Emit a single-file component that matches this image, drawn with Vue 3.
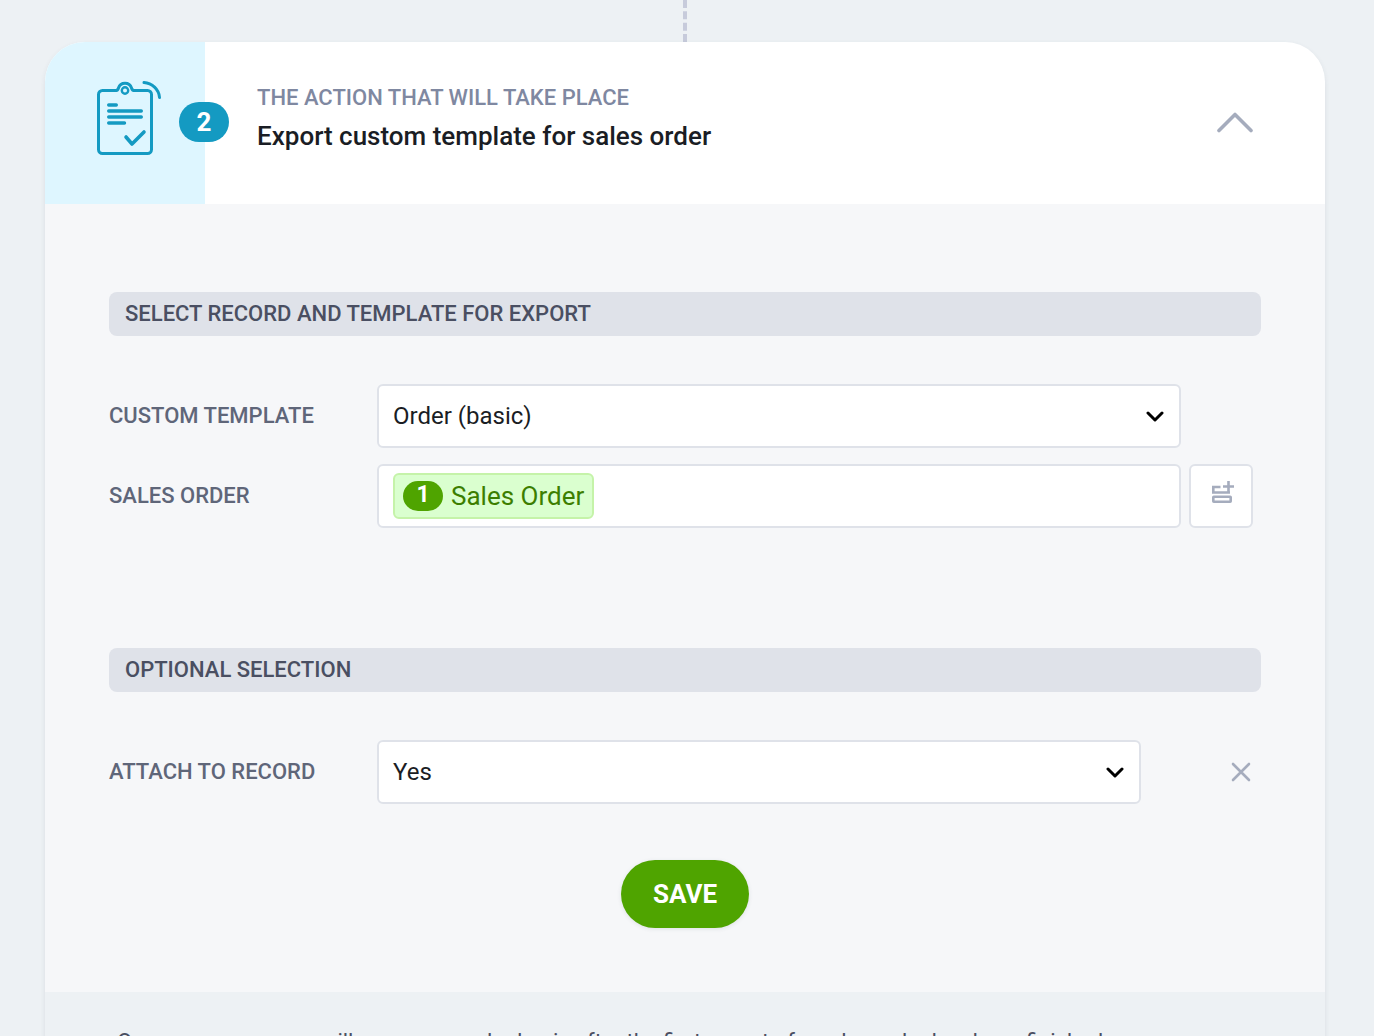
<script setup>
const fields = {
  template: 'Order (basic)',
  attach: 'Yes',
}
</script>

<template>
  <div class="page">
    <div class="connector"></div>
    <section class="card">
      <header class="head">
        <div class="icon-cell">
          <svg class="clip" width="68" height="78" viewBox="0 0 68 78" fill="none" stroke="#149ac2" stroke-width="3" stroke-linecap="round" stroke-linejoin="round">
            <path d="M21 10.500H7.500a4 4 0 0 0-4 4v55a4 4 0 0 0 4 4h45a4 4 0 0 0 4-4v-55a4 4 0 0 0-4-4H39" />
            <path d="M21 10.500c1.500 0 2-.8 2.500-2.500a6.800 6.800 0 0 1 13 0c.5 1.700 1 2.500 2.500 2.500" />
            <circle cx="30" cy="10.500" r="3.200" stroke-width="2.400" />
            <path d="M49 2.500c8 .5 15 7 15.500 15" />
            <path d="M13.700 25h7.600M13.700 31h32.600M13.700 37h32.600M13.700 43h15.800" stroke-width="3.400" />
            <path d="M31 57l6 7 12-12" stroke-width="3.600" />
          </svg>
        </div>
        <span class="step">2</span>
        <div class="titles">
          <div class="eyebrow">THE ACTION THAT WILL TAKE PLACE</div>
          <div class="title">Export custom template for sales order</div>
        </div>
        <svg class="collapse" width="38" height="22" viewBox="0 0 38 22" fill="none" stroke="#a5acbd" stroke-width="3.600" stroke-linecap="round" stroke-linejoin="round">
          <path d="M3 19.500L19 3.500l16 16" />
        </svg>
      </header>

      <div class="body">
        <h2 class="band">SELECT RECORD AND TEMPLATE FOR EXPORT</h2>
        <div class="rows">
          <div class="row">
            <label class="label">CUSTOM TEMPLATE</label>
            <div class="input wide">
              <span class="value">{{ fields.template }}</span>
              <svg class="chev" width="18" height="12" viewBox="0 0 18 12" fill="none" stroke="#000" stroke-width="3" stroke-linecap="round" stroke-linejoin="round"><path d="M2 3l7 7 7-7" /></svg>
            </div>
          </div>
          <div class="row">
            <label class="label">SALES ORDER</label>
            <div class="input wide">
              <span class="tag"><span class="tag-num">1</span><span class="tag-text">Sales Order</span></span>
            </div>
            <button class="add">
              <svg width="30" height="30" viewBox="0 0 30 30" fill="none" stroke="#a5acbd" stroke-width="2.600">
                <path d="M22.500 0v11M17 5.500h11" />
                <path d="M14.500 6H7.300v5.500H24" />
                <rect x="7.300" y="15.800" width="17.400" height="5" rx=".5" />
              </svg>
            </button>
          </div>
        </div>

        <h2 class="band second">OPTIONAL SELECTION</h2>
        <div class="rows">
          <div class="row">
            <label class="label">ATTACH TO RECORD</label>
            <div class="input narrow">
              <span class="value">{{ fields.attach }}</span>
              <svg class="chev" width="18" height="12" viewBox="0 0 18 12" fill="none" stroke="#000" stroke-width="3" stroke-linecap="round" stroke-linejoin="round"><path d="M2 3l7 7 7-7" /></svg>
            </div>
            <svg class="remove" width="20" height="20" viewBox="0 0 20 20" fill="none" stroke="#a5acbd" stroke-width="2.600" stroke-linecap="round"><path d="M2 2l16 16M18 2L2 18" /></svg>
          </div>
        </div>
        <div class="actions">
          <button class="save">SAVE</button>
        </div>
      </div>

      <footer class="foot">
        <p>Once your sequence will run on a regular basis after the first export of a sales order has been finished</p>
      </footer>
    </section>
  </div>
</template>

<style scoped>
.page {
  height: 1036px;
  overflow: hidden;
  padding-right: 4px;
  background: #edf1f4;
  font-family: Roboto, "Liberation Sans", sans-serif;
  box-sizing: border-box;
}
.connector {
  width: 0;
  height: 42px;
  margin: 0 auto;
  border-left: 4px dashed #c7cbdb;
}
.card {
  width: 1280px;
  margin: 0 auto;
  border-radius: 40px 40px 0 0;
  background: #edf1f4;
  box-shadow: 0 2px 5px rgba(60, 70, 90, 0.1);
  overflow: hidden;
}
.head {
  display: flex;
  align-items: center;
  height: 162px;
  background: #fff;
}
.icon-cell {
  width: 160px;
  height: 100%;
  flex: none;
  background: #def6ff;
  display: flex;
  padding: 38px 0 0 50px;
  box-sizing: border-box;
}
.clip { display: block; }
.step {
  flex: none;
  width: 50px;
  height: 40px;
  margin: -2px 0 0 -26px;
  border-radius: 20px;
  background: #149ac2;
  color: #fff;
  font-size: 26px;
  font-weight: 700;
  line-height: 40px;
  text-align: center;
}
.titles { margin-left: 28px; flex: 1; padding-bottom: 11px; }
.eyebrow {
  color: #7f88a1;
  font-size: 22px;
  font-weight: 500;
  line-height: 28px;
}
.title {
  margin-top: 8px;
  color: #1a1d24;
  font-size: 26px;
  font-weight: 500;
  line-height: 32px;
}
.collapse { flex: none; margin: 0 71px 0 0; position: relative; top: -1px; }
.body {
  background: #f6f7f9;
  height: 788px;
  padding: 88px 64px 0;
  box-sizing: border-box;
}
.band {
  margin: 0;
  height: 44px;
  padding-left: 16px;
  border-radius: 8px;
  background: #dfe2e9;
  color: #4a4f62;
  font-size: 22px;
  font-weight: 500;
  line-height: 44px;
}
.band.second { margin-top: 120px; }
.rows {
  display: flex;
  flex-direction: column;
  gap: 16px;
  margin-top: 48px;
}
.row {
  display: flex;
  align-items: center;
  height: 64px;
}
.label {
  flex: none;
  width: 268px;
  padding-bottom: 2px;
  color: #5f6679;
  font-size: 22px;
  font-weight: 500;
}
.input {
  display: flex;
  align-items: center;
  justify-content: space-between;
  height: 64px;
  padding: 0 15px 0 14px;
  box-sizing: border-box;
  border: 2px solid #dfe2e9;
  border-radius: 6px;
  background: #fff;
}
.input.wide { width: 804px; }
.input.narrow { width: 764px; }
.value {
  color: #1a1d24;
  font-size: 24px;
  padding-bottom: 1px;
}
.chev { flex: none; }
.tag {
  display: inline-flex;
  align-items: center;
  height: 46px;
  padding: 0 8px;
  box-sizing: border-box;
  border: 2px solid #c5f3a9;
  border-radius: 6px;
  background: #daffcf;
}
.tag-num {
  width: 40px;
  height: 30px;
  border-radius: 15px;
  background: #4fa400;
  color: #fff;
  font-size: 23px;
  font-weight: 700;
  line-height: 28px;
  text-align: center;
}
.tag-text {
  margin-left: 8px;
  color: #3c7e00;
  font-size: 26px;
  line-height: 44px;
}
.add {
  display: flex;
  align-items: center;
  justify-content: center;
  width: 64px;
  height: 64px;
  margin-left: 8px;
  padding: 0;
  border: 2px solid #dfe2e9;
  border-radius: 6px;
  background: #fff;
}
.remove { flex: none; margin-left: 90px; }
.actions {
  display: flex;
  justify-content: center;
  margin-top: 56px;
}
.save {
  width: 128px;
  height: 68px;
  padding: 0;
  border: 0;
  border-radius: 34px;
  background: #4fa400;
  color: #fff;
  font-family: inherit;
  font-size: 26px;
  font-weight: 700;
  box-shadow: 0 1px 4px rgba(60, 70, 90, 0.12);
}
.foot {
  padding: 37px 64px 0 72px;
  background: #edf1f4;
}
.foot p {
  margin: 0;
  color: #4a4f62;
  font-size: 22px;
  line-height: 26px;
  white-space: nowrap;
  overflow: hidden;
}
</style>
